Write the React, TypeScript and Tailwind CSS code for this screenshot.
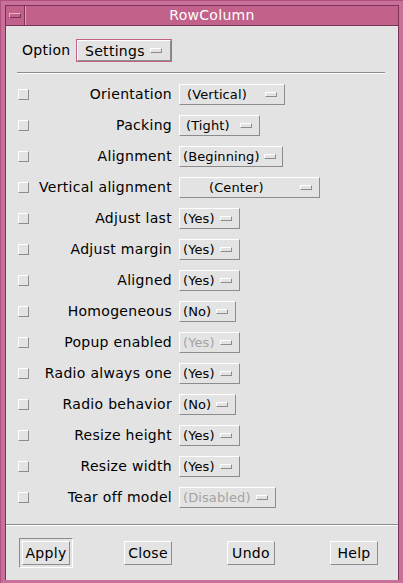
import React from "react"

const font = { fontFamily: '"DejaVu Sans", "Liberation Sans", sans-serif' }

interface Row {
  label: string
  value: string
  box: string
  disabled?: boolean
}

// box = width + left padding of the option button text, as measured
const rows: Row[] = [
  { label: "Orientation", value: "(Vertical)", box: "w-[106px] pl-[7px]" },
  { label: "Packing", value: "(Tight)", box: "w-[81px] pl-[6px]" },
  { label: "Alignment", value: "(Beginning)", box: "w-[104px] pl-[3px]" },
  { label: "Vertical alignment", value: "(Center)", box: "w-[141px] pl-[29px]" },
  { label: "Adjust last", value: "(Yes)", box: "w-[61px] pl-[3px]" },
  { label: "Adjust margin", value: "(Yes)", box: "w-[61px] pl-[3px]" },
  { label: "Aligned", value: "(Yes)", box: "w-[61px] pl-[3px]" },
  { label: "Homogeneous", value: "(No)", box: "w-[57px] pl-[3px]" },
  { label: "Popup enabled", value: "(Yes)", box: "w-[61px] pl-[3px]", disabled: true },
  { label: "Radio always one", value: "(Yes)", box: "w-[61px] pl-[3px]" },
  { label: "Radio behavior", value: "(No)", box: "w-[57px] pl-[3px]" },
  { label: "Resize height", value: "(Yes)", box: "w-[61px] pl-[3px]" },
  { label: "Resize width", value: "(Yes)", box: "w-[61px] pl-[3px]" },
  { label: "Tear off model", value: "(Disabled)", box: "w-[97px] pl-[3px]", disabled: true },
]

const raised = "border border-t-white border-l-white border-b-[#8c8c8c] border-r-[#8c8c8c]"
const text = "text-[14px] tracking-[0.3px]"

function CascadeMark() {
  return <span className={`block h-[5px] w-[12px] shrink-0 ${raised} bg-[#e3e3e3]`} />
}

function OptionButton({ row }: { row: Row }) {
  return (
    <div className={`flex h-[21px] items-center justify-between gap-[4px] overflow-hidden ${row.box} ${raised} pr-[7px]`}>
      <span
        className={`whitespace-nowrap text-[13px] tracking-[0.1px] leading-none ${
          row.disabled ? "text-[#a3a3a3]" : "text-black"
        }`}
      >
        {row.value}
      </span>
      <CascadeMark />
    </div>
  )
}

function PushButton({ label }: { label: string }) {
  return (
    <div className={`flex h-[24px] w-[48px] items-center justify-center ${raised} ${text} text-black`}>
      {label}
    </div>
  )
}

export default function App() {
  return (
    <div
      className="flex h-[583px] w-[403px] flex-col bg-[#c8709a] pt-[4px] pl-[4px] pr-[4px] border-l border-t border-[#b0507c] border-r-[#6e2a4c]"
      style={font}
    >
      <div className="flex flex-1 flex-col border-l border-t border-r border-[#7a3356]">
        {/* title bar */}
        <div className="flex h-[20px] items-stretch border-b border-[#7a3356] bg-[#c2628b]">
          <div className="flex w-[19px] items-center justify-center border-r border-[#7a3356]">
            <span className="block h-[5px] w-[12px] border border-t-[#e9b3cc] border-l-[#e9b3cc] border-b-[#7a3356] border-r-[#7a3356]" />
          </div>
          <div className="flex flex-1 items-center justify-center border-l border-[#e3a0be] text-[14px] tracking-[0.3px] text-white">
            RowColumn
          </div>
        </div>

        {/* body */}
        <div className="flex flex-1 flex-col bg-[#e3e3e3]">
          <div className="flex items-center pl-[16px] pt-[13px]">
            <span className={`w-[54px] ${text} text-black`}>Option</span>
            <div className="border border-[#c2628b]">
              <div className={`flex h-[21px] w-[94px] items-center justify-between ${raised} pl-[7px] pr-[8px]`}>
                <span className={`${text} leading-none text-black`}>Settings</span>
                <CascadeMark />
              </div>
            </div>
          </div>

          <div className="ml-[11px] mr-[13px] mt-[10px] border-t border-b border-t-[#8c8c8c] border-b-white" />

          <div className="mt-[5px] flex flex-col pl-[12px]">
            {rows.map((row) => (
              <div key={row.label} className="flex h-[31px] items-center">
                <span className={`block h-[11px] w-[11px] shrink-0 ${raised}`} />
                <span className={`w-[150px] whitespace-nowrap pr-[7px] text-right ${text} text-black`}>
                  {row.label}
                </span>
                <OptionButton row={row} />
              </div>
            ))}
          </div>

          <div className="mt-[11px] border-t border-b border-t-[#8c8c8c] border-b-white" />

          <div className="mt-[12px] flex items-center pl-[13px]">
            <div className="border border-t-[#8c8c8c] border-l-[#8c8c8c] border-b-white border-r-white p-[2px]">
              <PushButton label="Apply" />
            </div>
            <div className="ml-[51px]">
              <PushButton label="Close" />
            </div>
            <div className="ml-[55px]">
              <PushButton label="Undo" />
            </div>
            <div className="ml-[55px]">
              <PushButton label="Help" />
            </div>
          </div>
        </div>
      </div>
      <div className="h-[3px]" />
    </div>
  )
}
